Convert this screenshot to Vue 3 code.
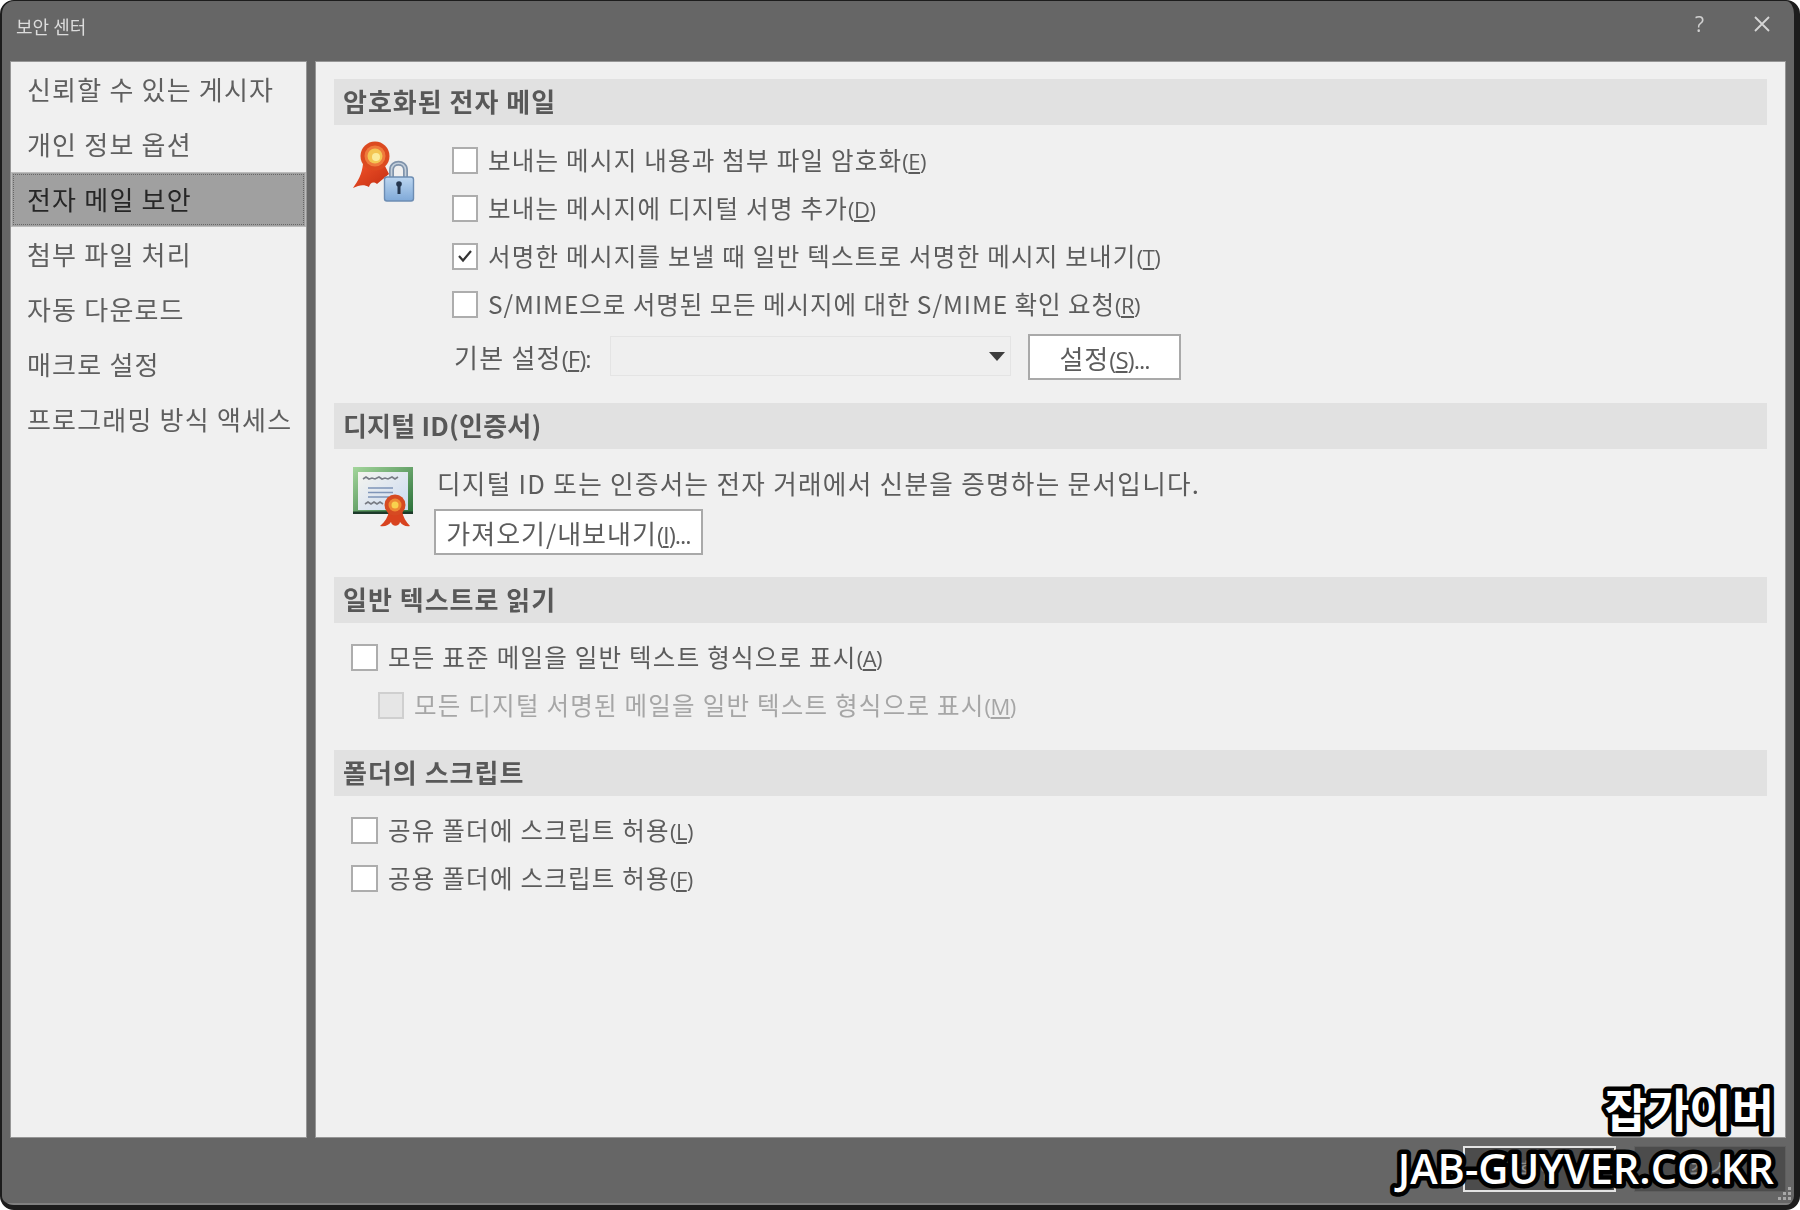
<script setup>
const navItems = ['신뢰할 수 있는 게시자', '개인 정보 옵션', '전자 메일 보안', '첨부 파일 처리', '자동 다운로드', '매크로 설정', '프로그래밍 방식 액세스']
const encryptRows = [
  { text: '보내는 메시지 내용과 첨부 파일 암호화', key: 'E' },
  { text: '보내는 메시지에 디지털 서명 추가', key: 'D' },
  { text: '서명한 메시지를 보낼 때 일반 텍스트로 서명한 메시지 보내기', key: 'T', checked: true },
  { text: 'S/MIME으로 서명된 모든 메시지에 대한 S/MIME 확인 요청', key: 'R', tight: true }
]
const plainRows = [
  { text: '모든 표준 메일을 일반 텍스트 형식으로 표시', key: 'A' },
  { text: '모든 디지털 서명된 메일을 일반 텍스트 형식으로 표시', key: 'M', disabled: true, indent: true }
]
const folderRows = [
  { text: '공유 폴더에 스크립트 허용', key: 'L' },
  { text: '공용 폴더에 스크립트 허용', key: 'F' }
]
</script>

<template>
  <div class="window">
    <header class="titlebar soft">
      <span class="title">보안 센터</span>
      <span class="help">?</span>
      <svg class="close" width="16" height="16" viewBox="0 0 16 16"><path d="M1 1L15 15M15 1L1 15" stroke="#d6d6d6" stroke-width="1.8" fill="none"/></svg>
    </header>

    <div class="panes soft">
      <nav class="sidebar">
        <div v-for="(item, i) in navItems" :key="item" class="nav-item" :class="{ active: i === 2 }">
          <span>{{ item }}</span>
        </div>
      </nav>

      <main class="content">
        <section class="sec sec-encrypt">
          <h2 class="head">암호화된 전자 메일</h2>
          <div class="encrypt-body">
            <svg class="icon-lock" width="66" height="64" viewBox="0 0 66 64">
              <defs>
                <linearGradient id="lg1" x1="0" y1="0" x2="0" y2="1">
                  <stop offset="0" stop-color="#bcd6f0"/>
                  <stop offset="1" stop-color="#7fa9d8"/>
                </linearGradient>
                <linearGradient id="lg3" x1="0" y1="0" x2="1" y2="1">
                  <stop offset="0" stop-color="#f4552a"/>
                  <stop offset="1" stop-color="#c22d12"/>
                </linearGradient>
              </defs>
              <path d="M12 24C11 34 7 41 2 48C8 45 13 44 18 47C19 43 22 41 26 44L38 34L32 22Z" fill="url(#lg3)"/>
              <circle cx="24" cy="16" r="14.5" fill="#dc4a20"/>
              <circle cx="24" cy="16" r="10.5" fill="#ef7a3c"/>
              <circle cx="24" cy="16" r="7.5" fill="#f3c552"/>
              <circle cx="25" cy="17" r="4" fill="#fbeb9a"/>
              <path d="M40.5 38V30C40.5 21 54.5 21 54.5 30V38" fill="none" stroke="#7f93ab" stroke-width="5"/>
              <path d="M40.5 38V30C40.5 21 54.5 21 54.5 30V38" fill="none" stroke="#c4d0dc" stroke-width="1.6"/>
              <rect x="33.5" y="37" width="29" height="24" rx="2.5" fill="url(#lg1)" stroke="#6d8db3" stroke-width="1.4"/>
              <circle cx="48" cy="44" r="2.8" fill="#24364e"/>
              <rect x="46.5" y="44" width="3" height="10" fill="#24364e"/>
            </svg>
            <div class="encrypt-rows">
              <label v-for="row in encryptRows" :key="row.key" class="row" :class="{ tight: row.tight }">
                <span class="box">
                  <svg v-if="row.checked" width="18" height="16" viewBox="0 0 18 16"><path d="M3 8L7 12.5L15 3" fill="none" stroke="#333" stroke-width="2.2"/></svg>
                </span>
                <span class="label">{{ row.text }}<span class="mn">(<u>{{ row.key }}</u>)</span></span>
              </label>
              <div class="settings-row">
                <span class="settings-label">기본 설정<span class="mn lg">(<u>F</u>):</span></span>
                <div class="select"><i class="caret"></i></div>
                <button class="btn btn-settings" type="button">설정<span class="mn lg">(<u>S</u>)...</span></button>
              </div>
            </div>
          </div>
        </section>

        <section class="sec sec-id">
          <h2 class="head">디지털 ID(인증서)</h2>
          <div class="id-body">
            <svg class="icon-cert" width="62" height="62" viewBox="0 0 62 62">
              <defs>
                <linearGradient id="lg2" x1="0" y1="0" x2="1" y2="1">
                  <stop offset="0" stop-color="#f4f4ee"/>
                  <stop offset="1" stop-color="#cbdaf2"/>
                </linearGradient>
                <linearGradient id="lg4" x1="0" y1="0" x2="1" y2="1">
                  <stop offset="0" stop-color="#a4d69c"/>
                  <stop offset="1" stop-color="#2a7038"/>
                </linearGradient>
              </defs>
              <rect x="0" y="0" width="60" height="46" fill="url(#lg4)"/>
              <rect x="0" y="44.5" width="60" height="2.5" fill="#1d3a2a"/>
              <rect x="5" y="5" width="50" height="38" fill="url(#lg2)"/>
              <path d="M10 12l3-2 3 2 3-1 3 1 4-2 3 2 3-1 3 1 4-2 3 2 3-2" fill="none" stroke="#777b84" stroke-width="1.6"/>
              <path d="M15 21H40M15 25.5H40M15 30H36" fill="none" stroke="#7f95b8" stroke-width="1.3"/>
              <path d="M12 37l3-2 3 2 3-2 3 2 3-2 3 2" fill="none" stroke="#777b84" stroke-width="1.6"/>
              <path d="M36 44C35 50 32 55 27 59C32 60 36 58 38 55C39 60 46 60 47 55C49 58 53 60 57 59C53 55 50 50 49 44Z" fill="#d8431f"/>
              <circle cx="42" cy="38" r="10.5" fill="#d64a22"/>
              <circle cx="42" cy="38" r="6.5" fill="#ee8a34"/>
              <circle cx="42" cy="38" r="3.5" fill="#f8d24e"/>
            </svg>
            <div class="id-text">
              <p class="id-desc">디지털 ID 또는 인증서는 전자 거래에서 신분을 증명하는 문서입니다.</p>
              <button class="btn btn-import" type="button">가져오기/내보내기<span class="mn lg">(<u>I</u>)...</span></button>
            </div>
          </div>
        </section>

        <section class="sec sec-plain">
          <h2 class="head">일반 텍스트로 읽기</h2>
          <div class="rows">
            <label v-for="row in plainRows" :key="row.key" class="row" :class="{ disabled: row.disabled, indent: row.indent }">
              <span class="box"></span>
              <span class="label">{{ row.text }}<span class="mn">(<u>{{ row.key }}</u>)</span></span>
            </label>
          </div>
        </section>

        <section class="sec sec-folder">
          <h2 class="head">폴더의 스크립트</h2>
          <div class="rows">
            <label v-for="row in folderRows" :key="row.text" class="row">
              <span class="box"></span>
              <span class="label">{{ row.text }}<span class="mn">(<u>{{ row.key }}</u>)</span></span>
            </label>
          </div>
        </section>
      </main>
    </div>

    <footer class="footer">
      <button class="foot-btn primary" type="button">확인</button>
      <button class="foot-btn" type="button">취소</button>
      <svg class="grip" width="14" height="14" viewBox="0 0 14 14"><path d="M10 1h3v3h-3zM5 6h3v3H5zM10 6h3v3h-3zM0 11h3v3H0zM5 11h3v3H5zM10 11h3v3h-3z" fill="#a8a8a8"/></svg>
    </footer>

    <svg class="watermark" width="420" height="135" viewBox="0 0 420 135">
      <text class="wm-ko" x="410" y="63" text-anchor="end">잡가이버</text>
      <text class="wm-en" x="410" y="120" text-anchor="end">JAB-GUYVER.CO.KR</text>
    </svg>
  </div>
</template>

<style>
html, body { margin: 0; background: #fff; }
</style>

<style scoped>
.window {
  position: relative;
  box-sizing: border-box;
  width: 1800px;
  height: 1210px;
  background: #666;
  border: solid #1c1c1c;
  border-width: 1px 6px 5px 2px;
  border-radius: 14px;
  display: flex;
  flex-direction: column;
  font-family: "Noto Sans CJK KR", "Noto Sans", sans-serif;
  color: #5c5c5c;
  overflow: hidden;
}
.soft { filter: blur(0.5px); }
.titlebar {
  height: 61px;
  flex: none;
  display: flex;
  align-items: flex-start;
  box-sizing: border-box;
  padding: 13px 24px 0 14px;
  color: #dcdcdc;
}
.title { font-size: 18px; line-height: 24px; flex: 1; }
.help { font-family: "Open Sans", sans-serif; font-size: 21px; line-height: 20px; margin-right: 50px; color: #d0d0d0; }
.close { margin-top: 2px; }
.panes {
  flex: 1;
  display: flex;
  gap: 10px;
  padding: 0 9px 0 9px;
  min-height: 0;
}
.sidebar, .content {
  background: #f0f0f0;
  box-sizing: border-box;
  box-shadow: 0 0 0 1px #969696;
}
.sidebar {
  width: 295px;
  flex: none;
}
.nav-item {
  height: 55px;
  box-sizing: border-box;
  display: flex;
  align-items: center;
  padding: 0 0 2px 16px;
  font-size: 26px;
  letter-spacing: 1.2px;
  color: #5f5f5f;
  white-space: nowrap;
}
.nav-item.active {
  background: #a0a0a0;
  color: #262626;
  outline: 1px dotted #666;
  outline-offset: -3px;
  box-shadow: 0 0 0 1px #bbb inset;
}
.content {
  flex: 1;
  padding: 17px 18px 0 18px;
}
.head {
  margin: 0;
  height: 46px;
  line-height: 43px;
  background: #e1e1e1;
  padding-left: 9px;
  font-size: 26px;
  font-weight: 700;
  letter-spacing: 1px;
  color: #585858;
}
.sec-encrypt { margin-bottom: 23px; }
.sec-id { margin-bottom: 22px; }
.sec-plain { margin-bottom: 21px; }
.sec-id .head { letter-spacing: 0.2px; }
.encrypt-body {
  display: flex;
  padding: 11px 0 0 17px;
}
.icon-lock { flex: none; margin: 4px 35px 0 0; }
.encrypt-rows { display: flex; flex-direction: column; }
.row {
  height: 48px;
  display: flex;
  align-items: center;
  white-space: nowrap;
}
.box {
  box-sizing: border-box;
  width: 27px;
  height: 27px;
  flex: none;
  background: #fff;
  border: 2px solid #adadad;
  margin-right: 10px;
  display: flex;
  align-items: center;
  justify-content: center;
}
.encrypt-rows .box { width: 26px; }
.label {
  font-size: 24.5px;
  letter-spacing: 1.25px;
  color: #5c5c5c;
  margin-top: -2px;
}
.row.tight .label { letter-spacing: 0.95px; }
.mn {
  font-family: "Open Sans", sans-serif;
  font-size: 22px;
  letter-spacing: -0.5px;
}
.mn.lg { font-size: 24px; letter-spacing: -1px; }
.settings-row {
  display: flex;
  align-items: center;
  margin-top: 6px;
  height: 46px;
}
.settings-label {
  width: 156px;
  margin-left: 2px;
  flex: none;
  font-size: 26px;
  letter-spacing: 1.25px;
  margin-top: -2px;
}
.select {
  box-sizing: border-box;
  width: 401px;
  height: 40px;
  flex: none;
  border: 1px solid #e4e4e4;
  background: #efefef;
  position: relative;
  margin-right: 17px;
  margin-top: -2px;
}
.caret {
  position: absolute;
  right: 5px;
  top: 15px;
  width: 0;
  height: 0;
  border-left: 8px solid transparent;
  border-right: 8px solid transparent;
  border-top: 9px solid #3d3d3d;
}
.btn {
  box-sizing: border-box;
  background: #fff;
  border: 2px solid #a9a9a9;
  font-family: inherit;
  color: #5c5c5c;
  padding: 0;
  font-size: 26px;
  letter-spacing: 1px;
  height: 46px;
}
.btn-settings { width: 153px; }
.sec-id .id-body {
  display: flex;
  padding: 18px 0 0 19px;
}
.icon-cert { flex: none; margin: 0 19px 0 0; }
.id-text { display: flex; flex-direction: column; }
.id-desc {
  margin: 0 0 0 3px;
  height: 42px;
  line-height: 32px;
  font-size: 25.6px;
  letter-spacing: 1.3px;
  white-space: nowrap;
}
.btn-import { width: 269px; }
.rows { display: flex; flex-direction: column; padding: 10px 0 0 17px; }
.row.indent { padding-left: 27px; }
.row.indent .box { width: 26px; }
.row.disabled .box { background: #e6e6e6; border-color: #cfcfcf; }
.row.disabled .label { color: #a6a6a6; }
.footer {
  height: 68px;
  flex: none;
  display: flex;
  justify-content: flex-end;
  gap: 18px;
  padding: 9px 8px 0 0;
  box-sizing: border-box;
  position: relative;
  border-bottom: 2px solid #808080;
}
.foot-btn {
  box-sizing: border-box;
  width: 152px;
  height: 46px;
  background: #4c4c4c;
  border: 1px solid #5e5e5e;
  color: #8f8f8f;
  font-family: inherit;
  font-size: 22px;
}
.foot-btn.primary { width: 153px; border: 2px solid #e4e4e4; }
.grip { position: absolute; right: 2px; bottom: 3px; }
.watermark {
  position: absolute;
  right: 10px;
  bottom: 6px;
  pointer-events: none;
}
.watermark text {
  fill: #fff;
  stroke: #000;
  stroke-width: 9px;
  stroke-linejoin: round;
  paint-order: stroke fill;
  font-weight: 700;
}
.wm-ko { font-size: 46px; }
.wm-en { font-family: "Open Sans", sans-serif; font-weight: 600 !important; font-size: 41.5px; }
</style>
